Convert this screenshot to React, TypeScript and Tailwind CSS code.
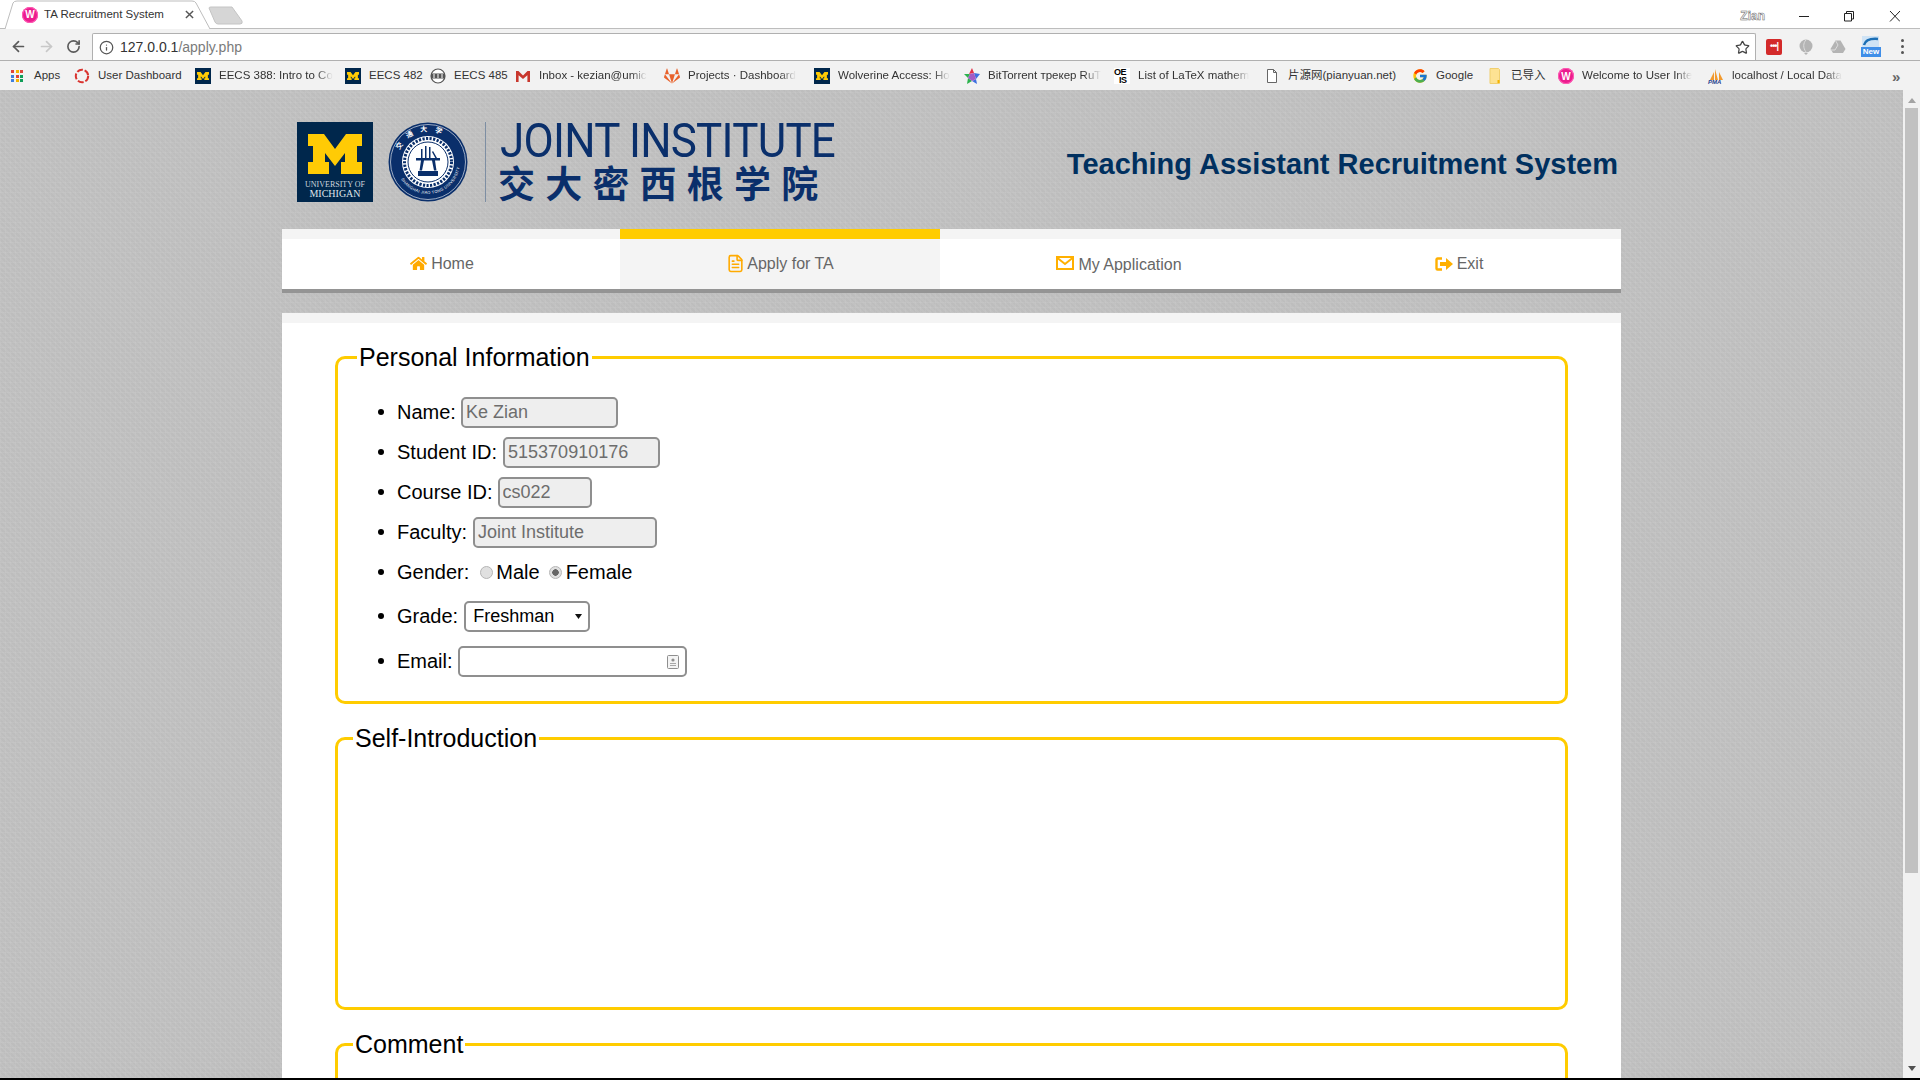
import { ReactNode } from "react";
import { FaHome, FaGitlab } from "react-icons/fa";
import { FcGoogle } from "react-icons/fc";
import { ArrowLeft, ArrowRight, RotateCw, Info, Star, FileText } from "lucide-react";

function BlockM({ className }: { className?: string }) {
  return (
    <svg viewBox="0 0 54 40" className={className}>
      <polygon fill="#ffcb05" points="0,0 16,0 27,15 38,0 54,0 54,12 49,12 49,28 54,28 54,40 33,40 33,28 37,28 37,19 27,32 17,19 17,28 21,28 21,40 0,40 0,28 5,28 5,12 0,12" />
    </svg>
  );
}

function MIcon() {
  return (
    <span className="flex h-4 w-4 items-center justify-center bg-[#00274c]">
      <BlockM className="w-3" />
    </span>
  );
}

function WampIcon() {
  return (
    <span className="flex h-4 w-4 items-center justify-center rounded-full bg-[#ec1c8e] text-[10px] font-bold text-white ring-1 ring-inset ring-[#ff5db5]">
      W
    </span>
  );
}

function DashIcon() {
  return (
    <svg viewBox="0 0 16 16" className="h-4 w-4">
      <circle cx="8" cy="8" r="6.2" fill="none" stroke="#d9332f" strokeWidth="2" strokeDasharray="6 1.8" />
    </svg>
  );
}

function WwwIcon() {
  return (
    <svg viewBox="0 0 16 16" className="h-4 w-4">
      <circle cx="8" cy="8" r="7" fill="#fff" stroke="#555" strokeWidth="1.2" />
      <rect x="1" y="5.5" width="14" height="5" fill="#555" />
      <path d="M3 7h2M7 7h2M11 7h2M3 9h2M7 9h2M11 9h2" stroke="#fff" strokeWidth="1" />
    </svg>
  );
}

function GmailIcon() {
  return (
    <svg viewBox="0 0 16 16" className="h-4 w-4">
      <path d="M1 3h2.5L8 7.5 12.5 3H15v11h-2.6V7.2L8 11 3.6 7.2V14H1z" fill="#c8372d" />
    </svg>
  );
}

function TorrentIcon() {
  return (
    <svg viewBox="0 0 16 16" className="h-4 w-4">
      <polygon points="8,0 10,5 5,6" fill="#e2324a" />
      <polygon points="10,5 16,6 12,11" fill="#3d6fe0" />
      <polygon points="12,11 13,16 8,13" fill="#3d6fe0" />
      <polygon points="8,13 3,16 4,10" fill="#2bb24c" />
      <polygon points="4,10 0,6 6,6" fill="#2bb24c" />
      <polygon points="6,6 10,5 12,11 8,13 4,10" fill="#a45bc4" />
    </svg>
  );
}

function OeisIcon() {
  return (
    <span className="flex h-4 w-4 flex-col bg-white text-[9px] font-bold leading-[8px] tracking-[-0.5px] text-black">
      <span>OE</span>
      <span className="pl-[5px]">IS</span>
    </span>
  );
}

function PageIcon() {
  return (
    <svg viewBox="0 0 16 16" className="h-4 w-4">
      <path d="M3.5 1.5h6l3 3v10h-9z M9.5 1.5v3h3" fill="#fff" stroke="#666" />
    </svg>
  );
}

function FolderIcon() {
  return (
    <svg viewBox="0 0 16 16" className="h-4 w-4">
      <path d="M3 0.5h8.5l1 1V15.5H3z" fill="#fde293" stroke="#f0cf6f" />
      <rect x="10.5" y="12" width="2" height="3" fill="#f5b400" />
    </svg>
  );
}

function PmaIcon() {
  return (
    <span className="relative block h-4 w-4">
      <svg viewBox="0 0 16 12" className="absolute left-0 top-0 h-3 w-4">
        <path d="M2 12 6 4v8zM7 12V1l3 11zM11 12V4l4 8z" fill="#f29a2e" />
      </svg>
      <span className="absolute -bottom-[2px] left-0 text-[6px] font-bold italic leading-[7px] text-[#1f3f8f]">PMA</span>
    </span>
  );
}

function AppsIcon() {
  const colors = ["#e0433a", "#f4b400", "#e0433a", "#3d7fe0", "#e0433a", "#0f9d58", "#3d7fe0", "#f4b400", "#0f9d58"];
  return (
    <span className="grid h-3 w-3 grid-cols-3 gap-[1.5px]">
      {colors.map((c, i) => (
        <svg key={i} viewBox="0 0 3 3" className="h-[3px] w-[3px]">
          <rect width="3" height="3" fill={c} />
        </svg>
      ))}
    </span>
  );
}

const bookmarks: { icon: ReactNode; label: string; width: string; fade?: boolean }[] = [
  { icon: <DashIcon />, label: "User Dashboard", width: "w-[121px]" },
  { icon: <MIcon />, label: "EECS 388: Intro to Co", width: "w-[150px]", fade: true },
  { icon: <MIcon />, label: "EECS 482", width: "w-[85px]" },
  { icon: <WwwIcon />, label: "EECS 485", width: "w-[85px]" },
  { icon: <GmailIcon />, label: "Inbox - kezian@umic", width: "w-[149px]", fade: true },
  { icon: <FaGitlab className="h-4 w-4 text-[#e8622c]" />, label: "Projects · Dashboard", width: "w-[150px]", fade: true },
  { icon: <MIcon />, label: "Wolverine Access: Ho", width: "w-[150px]", fade: true },
  { icon: <TorrentIcon />, label: "BitTorrent трекер RuT", width: "w-[150px]", fade: true },
  { icon: <OeisIcon />, label: "List of LaTeX mathem", width: "w-[150px]", fade: true },
  { icon: <PageIcon />, label: "片源网(pianyuan.net)", width: "w-[148px]" },
  { icon: <FcGoogle className="h-4 w-4" />, label: "Google", width: "w-[75px]" },
  { icon: <FolderIcon />, label: "已导入", width: "w-[71px]" },
  { icon: <WampIcon />, label: "Welcome to User Inte", width: "w-[150px]", fade: true },
  { icon: <PmaIcon />, label: "localhost / Local Data", width: "w-[149px]", fade: true },
];

function Bookmark({ icon, label, width, fade }: { icon: ReactNode; label: string; width: string; fade?: boolean }) {
  return (
    <div className={`flex shrink-0 items-center gap-2 ${width}`}>
      <span className="flex h-4 w-4 shrink-0 items-center justify-center">{icon}</span>
      <span className={fade ? "whitespace-nowrap [mask-image:linear-gradient(90deg,#000_85%,transparent)]" : "whitespace-nowrap"}>{label}</span>
    </div>
  );
}

function BrowserChrome() {
  return (
    <div className="h-[90px] text-[#333]">
      {/* tab strip */}
      <div className="relative h-[29px] border-b border-[#bdbdbd] bg-white">
        <svg viewBox="0 0 250 29" className="absolute left-0 top-0 h-[29px] w-[250px]">
          <path d="M5 29 L13 3 Q14 1 17 1 H192 Q195 1 196 3 L210 29" fill="#fff" stroke="#bdbdbd" />
          <path d="M209 8 Q209 7 211 7 H232 L242 21 Q243 24 240 24 H218 Q216 24 215 22 Z" fill="#d6d6d6" stroke="#c4c4c4" />
        </svg>
        <div className="relative flex h-[28px] items-center pl-[22px] pt-[1px] text-[11.5px]">
          <WampIcon />
          <span className="ml-[6px] w-[125px] whitespace-nowrap">TA Recruitment System</span>
          <svg viewBox="0 0 10 10" className="ml-[16px] h-[9px] w-[9px]">
            <path d="M1 1l8 8M9 1l-8 8" stroke="#555" strokeWidth="1.6" />
          </svg>
        </div>
        <div className="absolute right-[20px] top-[7px] flex items-center">
          <span className="mr-[34px] text-[12px] font-bold text-white [-webkit-text-stroke:0.5px_#666]">Zian</span>
          <svg viewBox="0 0 101 12" className="h-3 w-[101px]">
            <path d="M0 6.5h10" stroke="#222" strokeWidth="1" />
            <path d="M45.5 3.5h7v7.5h-7zM47.5 3.5v-2h7v7.5h-2" fill="none" stroke="#222" strokeWidth="1" />
            <path d="M91 1l10 10.5M101 1L91 11.5" stroke="#222" strokeWidth="1" />
          </svg>
        </div>
      </div>
      {/* toolbar */}
      <div className="flex h-[32px] items-center border-b border-[#b0b0b0] bg-[#f2f2f2] pt-[4px]">
        <div className="flex w-[92px] shrink-0 items-center pl-[10px]">
          <ArrowLeft className="h-[17px] w-[17px] text-[#5a5a5a]" strokeWidth={2.4} />
          <ArrowRight className="ml-[11px] h-[17px] w-[17px] text-[#c8c8c8]" strokeWidth={2.4} />
          <RotateCw className="ml-[11px] h-[15px] w-[15px] text-[#5a5a5a]" strokeWidth={2.6} />
        </div>
        <div className="flex h-[27px] w-[1664px] shrink-0 items-center rounded-t-[2px] border border-b-0 border-[#b0b0b0] bg-white pl-[6px] pr-[5px] text-[14px]">
          <Info className="h-[15px] w-[15px] text-[#555]" strokeWidth={2} />
          <span className="ml-[6px]">127.0.0.1</span>
          <span className="text-[#7a7a7a]">/apply.php</span>
          <Star className="ml-auto h-[15px] w-[15px] text-[#444]" strokeWidth={2} />
        </div>
        <div className="flex items-center">
          <span className="ml-[10px] flex h-4 w-4 items-center justify-center rounded-[2px] bg-[#d32a2a] text-[9px] font-bold leading-none tracking-[-1px] text-white">•••|</span>
          <svg viewBox="0 0 16 16" className="ml-[16px] h-4 w-4">
            <circle cx="8" cy="7" r="6.5" fill="#b4b4b4" />
            <path d="M8 1c-3 3-3 8 0 12" fill="none" stroke="#dcdcdc" />
            <path d="M6 14h4l-2 2z" fill="#b4b4b4" />
          </svg>
          <svg viewBox="0 0 16 16" className="ml-[16px] h-4 w-4">
            <path d="M5.5 1.5h5L15.5 10l-2.5 4H3L.5 10z" fill="#b4b4b4" />
            <path d="M5.5 1.5 8 6 5 11H.5" fill="none" stroke="#dcdcdc" />
          </svg>
          <span className="relative ml-[15px] block h-[21px] w-[20px]">
            <svg viewBox="0 0 20 12" className="absolute left-0 top-0 h-3 w-5">
              <rect x="1" width="17" height="12" fill="#cfe3f5" />
              <path d="M3 9Q5 2 17 3" fill="none" stroke="#1c6fb5" strokeWidth="2.5" />
            </svg>
            <span className="absolute bottom-0 left-0 w-5 bg-[#3f8ee8] text-center text-[8px] font-bold leading-[10px] text-white">New</span>
          </span>
          <span className="ml-[20px] flex flex-col gap-[3px]">
            <span className="h-[3px] w-[3px] rounded-full bg-[#555]" />
            <span className="h-[3px] w-[3px] rounded-full bg-[#555]" />
            <span className="h-[3px] w-[3px] rounded-full bg-[#555]" />
          </span>
        </div>
      </div>
      {/* bookmarks */}
      <div className="relative flex h-[29px] items-center bg-[#f2f2f2] pl-[11px] pt-[1px] text-[11.5px]">
        <div className="flex w-[63px] shrink-0 items-center gap-[11px]">
          <AppsIcon />
          <span>Apps</span>
        </div>
        {bookmarks.map((b) => (
          <Bookmark key={b.label} {...b} />
        ))}
        <span className="ml-[35px] text-[15px] font-bold leading-none text-[#666]">»</span>
      </div>
    </div>
  );
}

function Seal() {
  return (
    <svg viewBox="0 0 80 80" className="h-20 w-20 shrink-0">
      <defs>
        <path id="sealTop" d="M9.5 40a30.5 30.5 0 0 1 61 0" />
        <path id="sealBottom" d="M8 40a32 32 0 0 0 64 0" />
      </defs>
      <circle cx="40" cy="40" r="39.5" fill="#0a2f6b" />
      <circle cx="40" cy="40" r="37.5" fill="none" stroke="#fff" strokeWidth="0.6" />
      <circle cx="40" cy="40" r="26" fill="#fff" />
      <circle cx="40" cy="40" r="23.5" fill="none" stroke="#0a2f6b" strokeWidth="3" strokeDasharray="2.2 1.4" />
      <circle cx="40" cy="40" r="20" fill="#fff" stroke="#0a2f6b" strokeWidth="1" />
      <path d="M28 36h24v2.5H47l1.5 10h-2.5L44 38.5h-8l-2 10h-2.5l1.5-10h-5zM37 24h1.5v12H37zM41 25h1.5v11H41zM33 27h1.5v9H33zM45 29l4 7h-1.7l-3.3-6z" fill="#0a2f6b" />
      <rect x="30" y="49" width="20" height="5" fill="#0a2f6b" />
      <text fontSize="7" fill="#fff" fontWeight="bold" fontFamily="'Noto Sans CJK SC', sans-serif" letterSpacing="7">
        <textPath href="#sealTop" startOffset="12">交通大学</textPath>
      </text>
      <text fontSize="4" fill="#fff" fontFamily="'Liberation Sans', sans-serif" letterSpacing="0.3">
        <textPath href="#sealBottom" startOffset="18">SHANGHAI JIAO TONG UNIVERSITY</textPath>
      </text>
    </svg>
  );
}

function Logo() {
  return (
    <div className="flex items-start">
      <div className="flex h-20 w-[76px] shrink-0 flex-col items-center bg-[#00274c] pt-[12px]">
        <BlockM className="w-[54px]" />
        <span className="mt-[6px] font-['Liberation_Serif',serif] text-[8px] leading-[9px] text-[#cfd6de]">UNIVERSITY OF</span>
        <span className="font-['Liberation_Serif',serif] text-[10px] leading-[10px] text-[#dfe4ea]">MICHIGAN</span>
      </div>
      <div className="ml-[15px]">
        <Seal />
      </div>
      <div className="ml-[17px] h-20 w-px bg-[#7d8ea3]" />
      <div className="ml-[14px] flex flex-col">
        <span className="origin-left scale-x-[0.915] whitespace-nowrap font-['Roboto',sans-serif] text-[48px] font-normal leading-[38px] tracking-[-0.8px] text-[#0a2f6b]">JOINT INSTITUTE</span>
        <span className="-ml-[2px] mt-[4px] whitespace-nowrap font-['Noto_Sans_CJK_SC',sans-serif] text-[37px] font-bold leading-[36px] tracking-[10.2px] text-[#0a2f6b]">交大密西根学院</span>
      </div>
    </div>
  );
}

function EnvelopeIcon() {
  return (
    <svg viewBox="0 0 18 14" className="-mt-[4px] h-[14px] w-[18px]">
      <rect x="1" y="1" width="16" height="12" fill="none" stroke="#ffb000" strokeWidth="2" />
      <path d="M1.5 2 9 8l7.5-6" fill="none" stroke="#ffb000" strokeWidth="2" />
    </svg>
  );
}

function ExitIcon() {
  return (
    <svg viewBox="0 0 18 14" className="h-[14px] w-[18px]">
      <path d="M7 1.5H2.5a1 1 0 0 0-1 1v9a1 1 0 0 0 1 1H7" fill="none" stroke="#ffb000" strokeWidth="2.4" />
      <path d="M5 5h6V1l7 6-7 6V9H5z" fill="#ffb000" />
    </svg>
  );
}

const tabs: { label: string; icon: ReactNode; active?: boolean; extra?: string }[] = [
  { label: "Home", icon: <FaHome className="-mt-[2px] h-[17px] w-[17px] text-[#ffaa00]" /> },
  { label: "Apply for TA", icon: <FileText className="-mt-[2px] h-[19px] w-[19px] text-[#ffaa00]" strokeWidth={2} />, active: true },
  { label: "My Application", icon: <EnvelopeIcon />, extra: "pt-[2px] pl-[2px]" },
  { label: "Exit", icon: <ExitIcon />, extra: "pl-[6px]" },
];

function Nav() {
  return (
    <nav className="flex h-[64px] gap-[18px] border-t-[10px] border-b-4 border-t-[#f4f4f4] border-b-[#949494] bg-white text-[16px] text-[#666]">
      {tabs.map((t) => (
        <div
          key={t.label}
          className={
            t.active
              ? "-mt-[10px] flex h-[60px] w-[320px] items-center justify-center gap-[2px] border-t-[10px] border-[#ffcc00] bg-[#f4f4f4]"
              : `flex h-[50px] w-[320px] items-center justify-center gap-[4px] ${t.extra ?? ""}`
          }
        >
          {t.icon}
          <span>{t.label}</span>
        </div>
      ))}
    </nav>
  );
}

function ReadOnly({ value, className }: { value: string; className: string }) {
  return (
    <input
      readOnly
      value={value}
      className={`h-[31px] rounded-[5px] border-2 border-[#8f8f8f] bg-[#eeeeee] px-[3px] text-[18px] text-[#6d6d6d] outline-none ${className}`}
    />
  );
}

function Row({ height, children }: { height: string; children: ReactNode }) {
  return (
    <li className={`relative flex items-center ${height}`}>
      <span className="absolute -left-[19px] top-1/2 h-[6px] w-[6px] -translate-y-1/2 rounded-full bg-black" />
      {children}
    </li>
  );
}

function PersonalInfo() {
  return (
    <fieldset className="h-[361px] rounded-[10px] border-[3px] border-[#ffcc00]">
      <legend className="ml-[19px] px-[2px] text-[25px] leading-[29px] text-black">Personal Information</legend>
      <ul className="ml-[59px] mt-[20px] text-[20px] text-black">
        <Row height="h-10">
          <span>Name:</span>
          <ReadOnly value="Ke Zian" className="ml-[5px] w-[157px]" />
        </Row>
        <Row height="h-10">
          <span>Student ID:</span>
          <ReadOnly value="515370910176" className="ml-[6px] w-[157px]" />
        </Row>
        <Row height="h-10">
          <span>Course ID:</span>
          <ReadOnly value="cs022" className="ml-[5px] w-[94px]" />
        </Row>
        <Row height="h-10">
          <span>Faculty:</span>
          <ReadOnly value="Joint Institute" className="ml-[6px] w-[184px]" />
        </Row>
        <Row height="h-10">
          <span>Gender:</span>
          <input type="radio" name="gender" disabled className="ml-[11px] h-[13px] w-[13px] appearance-none rounded-full border border-[#b5b5b5] bg-[#e0e0e0]" />
          <span className="ml-[3px]">Male</span>
          <input type="radio" name="gender" disabled defaultChecked className="ml-[9px] h-[13px] w-[13px] appearance-none rounded-full border border-[#b5b5b5] bg-[radial-gradient(circle,#666_0_3px,#e0e0e0_3.5px)]" />
          <span className="ml-[4px]">Female</span>
        </Row>
        <Row height="h-12">
          <span>Grade:</span>
          <div className="relative ml-[6px]">
            <select className="block h-[31px] w-[126px] appearance-none rounded-[5px] border-2 border-[#8f8f8f] bg-white pl-[7px] text-[18px] text-black outline-none">
              <option>Freshman</option>
            </select>
            <svg viewBox="0 0 7 5" className="pointer-events-none absolute right-[8px] top-[13px] h-[5px] w-[7px]">
              <path d="M0 0h7L3.5 5z" fill="#111" />
            </svg>
          </div>
        </Row>
        <Row height="h-[42px]">
          <span>Email:</span>
          <div className="relative ml-[5px]">
            <input type="email" className="block h-[31px] w-[229px] rounded-[5px] border-2 border-[#8f8f8f] bg-white outline-none" />
            <svg viewBox="0 0 12 14" className="absolute right-[8px] top-[9px] h-[14px] w-3">
              <rect x="0.5" y="0.5" width="11" height="13" rx="1" fill="#f4f4f4" stroke="#8f8f8f" />
              <circle cx="6" cy="5" r="1.6" fill="#8f8f8f" />
              <path d="M3 8h6v1H3zM3 10h6v1H3z" fill="#a8a8a8" />
            </svg>
          </div>
        </Row>
      </ul>
    </fieldset>
  );
}

function Section({ title, height }: { title: string; height: string }) {
  return (
    <fieldset className={`rounded-[10px] border-[3px] border-[#ffcc00] ${height}`}>
      <legend className="ml-[15px] px-[2px] text-[25px] leading-[29px] text-black">{title}</legend>
    </fieldset>
  );
}

function Scrollbar() {
  return (
    <div className="flex w-[17px] shrink-0 flex-col items-center bg-[#f1f1f1]">
      <svg viewBox="0 0 8 5" className="mt-[8px] h-[5px] w-2">
        <path d="M0 5h8L4 0z" fill="#a3a3a3" />
      </svg>
      <div className="mt-[5px] h-[765px] w-[13px] bg-[#c1c1c1]" />
      <svg viewBox="0 0 8 5" className="mt-[193px] h-[5px] w-2">
        <path d="M0 0h8L4 5z" fill="#505050" />
      </svg>
    </div>
  );
}

export default function App() {
  return (
    <div className="h-[1080px] w-[1920px] overflow-hidden bg-white font-['Liberation_Sans','Noto_Sans_CJK_SC',sans-serif]">
      <BrowserChrome />
      <div className="flex h-[988px] overflow-hidden">
        <main className="h-full flex-1 overflow-hidden bg-[#c1c1c1] bg-[image:repeating-linear-gradient(0deg,rgba(255,255,255,0.06)_0_1px,transparent_1px_5px),repeating-linear-gradient(90deg,rgba(255,255,255,0.05)_0_1px,transparent_1px_5px),repeating-linear-gradient(45deg,rgba(0,0,0,0.02)_0_2px,transparent_2px_4px)]">
          <div className="mx-auto w-[1339px]">
            <header className="flex h-[139px] items-start justify-between pl-[15px] pr-[3px] pt-[32px]">
              <Logo />
              <h1 className="mt-[25px] whitespace-nowrap text-[29px] font-bold leading-[34px] text-[#00305f]">Teaching Assistant Recruitment System</h1>
            </header>
            <Nav />
            <div className="mt-[20px] flex flex-col gap-5 border-t-[10px] border-[#f4f4f4] bg-white px-[53px] pb-[40px] pt-[20px]">
              <PersonalInfo />
              <Section title="Self-Introduction" height="h-[286px]" />
              <Section title="Comment" height="h-[200px]" />
            </div>
          </div>
        </main>
        <Scrollbar />
      </div>
      <div className="h-[2px] bg-black" />
    </div>
  );
}
